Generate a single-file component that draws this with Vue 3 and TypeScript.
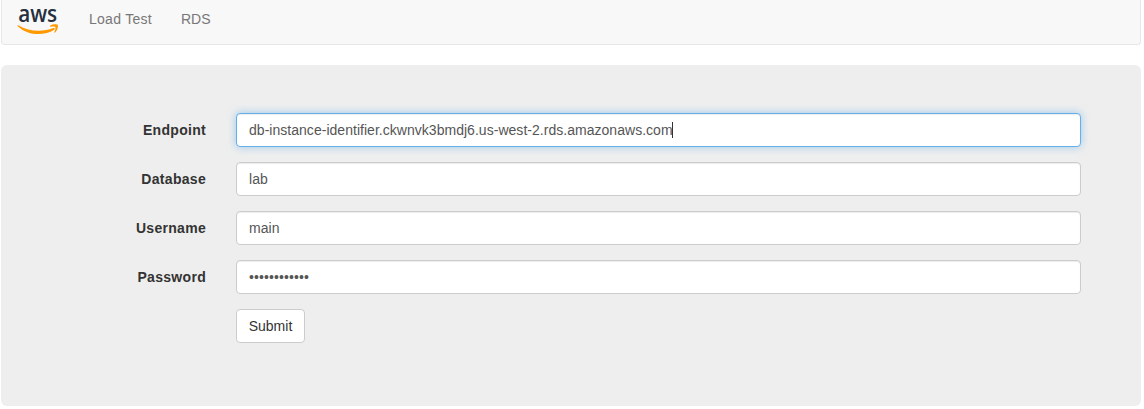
<script setup lang="ts">
import { reactive } from 'vue'

interface Field {
  id: string
  label: string
  type: 'text' | 'password'
  value: string
  active?: boolean
}

const links: { label: string; cls: string }[] = [
  { label: 'Load Test', cls: 'load' },
  { label: 'RDS', cls: 'rds' },
]

const fields = reactive<Field[]>([
  { id: 'endpoint', label: 'Endpoint', type: 'text', value: 'db-instance-identifier.ckwnvk3bmdj6.us-west-2.rds.amazonaws.com', active: true },
  { id: 'database', label: 'Database', type: 'text', value: 'lab' },
  { id: 'username', label: 'Username', type: 'text', value: 'main' },
  { id: 'password', label: 'Password', type: 'password', value: 'labpassword1' },
])
</script>

<template>
  <div class="container">
    <nav class="navbar">
      <a class="brand" aria-label="aws">
        <svg width="42" height="36" viewBox="0 0 42 36">
          <text class="wordmark" x="1.2" y="22" textLength="39" lengthAdjust="spacingAndGlyphs">aws</text>
          <path d="M1.200 25.200C12 31.600 25 32.600 36.300 28.100c1.400-.6 2.200.7.900 1.600C27 36.100 11.500 35.900.9 26.400c-.8-.8-.4-1.500.3-1.200z" fill="#f90" />
          <path d="M33.200 25.700c2.200-1.700 6.600-1.900 7.500-.9.800 1.100-.2 5.600-2.500 7.700-.5.400-1 .1-.8-.4.700-1.800 1.500-4.300.9-5.100-.6-.7-3.100-.4-4.700-.3-.7 0-.9-.5-.4-1z" fill="#f90" />
        </svg>
      </a>
      <a v-for="link in links" :key="link.label" class="link" :class="link.cls">{{ link.label }}</a>
    </nav>

    <main class="panel">
      <form @submit.prevent>
        <div v-for="field in fields" :key="field.id" class="row">
          <label :for="field.id">{{ field.label }}</label>
          <div class="control">
            <input :id="field.id" v-model="field.value" :type="field.type" :class="{ active: field.active }" autocomplete="off" spellcheck="false" />
            <span v-if="field.active" class="caret"></span>
          </div>
        </div>
        <button type="submit">Submit</button>
      </form>
    </main>
  </div>
</template>

<style>
body {
  background: #fff;
  overflow: hidden;
}
</style>

<style scoped>
.container,
.container * {
  box-sizing: border-box;
}
.container {
  width: 1140px;
  margin-left: 1px;
  font: 14px/20px "Liberation Sans", Arial, sans-serif;
  color: #333;
}
.navbar {
  display: flex;
  align-items: flex-start;
  height: 45px;
  padding-left: 15px;
  background: #f8f8f8;
  border: 1px solid #e7e7e7;
  border-top: 0;
  border-radius: 0 0 4px 4px;
}
.brand {
  width: 42px;
  height: 36px;
}
.brand svg {
  display: block;
  overflow: visible;
}
.wordmark {
  font: 600 24px "Open Sans", sans-serif;
  fill: #252f3e;
}
.link {
  margin-top: 9px;
  margin-left: 30px;
  color: #777;
}
.link.load {
  width: 62px;
  white-space: nowrap;
  letter-spacing: 0.27px;
}
.panel {
  height: 341px;
  margin-top: 20px;
  padding: 48px 60px 0 0;
  background: #eee;
  border-radius: 6px;
}
.row {
  display: flex;
  height: 34px;
  margin-bottom: 15px;
}
label {
  width: 205px;
  margin-right: 30px;
  padding-top: 7px;
  text-align: right;
  font-weight: 700;
  letter-spacing: 0.3px;
}
.control {
  position: relative;
  flex: 1;
}
input {
  display: block;
  width: 100%;
  height: 34px;
  padding: 6px 12px;
  font: inherit;
  letter-spacing: 0.03px;
  color: #555;
  background: #fff;
  border: 1px solid #ccc;
  border-radius: 4px;
  outline: 0;
  box-shadow: inset 0 1px 1px rgba(0, 0, 0, 0.075);
}
input[type='password'] {
  letter-spacing: 0.1px;
}
input.active {
  border-color: #66afe9;
  box-shadow: inset 0 1px 1px rgba(0, 0, 0, 0.075), 0 0 8px rgba(102, 175, 233, 0.6);
}
.caret {
  position: absolute;
  left: 436px;
  top: 9px;
  width: 1px;
  height: 16px;
  background: #333;
}
button {
  display: block;
  width: 69px;
  height: 34px;
  margin-left: 235px;
  padding: 0;
  font: inherit;
  color: #333;
  background: #fff;
  border: 1px solid #ccc;
  border-radius: 4px;
}
</style>
